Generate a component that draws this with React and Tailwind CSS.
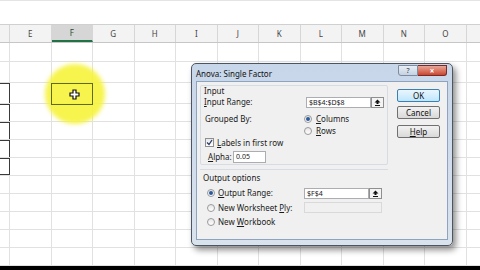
import React from "react";

const cols = ["E", "F", "G", "H", "I", "J", "K", "L", "M", "N", "O"];
const rowHeights = [19, 21, 21, 18, 18, 18, 18, 18, 18, 18, 18, 18];

function Radio({ checked }) {
  return (
    <span className="w-[8px] h-[8px] rounded-full border border-[#9a9a9a] bg-gradient-to-b from-[#e6e6e6] to-[#ffffff] flex items-center justify-center shrink-0">
      {checked && <span className="w-[4px] h-[4px] rounded-full bg-[#2c5a9e]" />}
    </span>
  );
}

function RefButton() {
  return (
    <span className="w-[13px] h-[11px] border border-[#8e8f8f] bg-[#f4f4f4] flex items-center justify-center shrink-0">
      <svg width="7" height="7" viewBox="0 0 7 7">
        <path d="M3.5 0.5 L6.5 3.5 L4.5 3.5 L4.5 5 L2.5 5 L2.5 3.5 L0.5 3.5 Z" fill="#111" />
        <rect x="1" y="6" width="5" height="1" fill="#111" />
      </svg>
    </span>
  );
}

function Btn({ children, focused }) {
  return (
    <div
      className={
        "w-[43px] h-[13px] rounded-[2px] flex items-center justify-center text-[#111] " +
        (focused
          ? "border border-[#3c7fb1] bg-gradient-to-b from-[#eaf6fd] to-[#bee6fd]"
          : "border border-[#707070] bg-gradient-to-b from-[#f2f2f2] to-[#d9d9d9]")
      }
    >
      {children}
    </div>
  );
}

export default function App() {
  return (
    <div
      className="relative w-[480px] h-[270px] overflow-hidden bg-white"
      style={{ fontFamily: '"Noto Sans", "DejaVu Sans", sans-serif' }}
    >
      {/* Top blank area */}
      <div className="h-[25px] border-t border-t-[#e4e4e4] border-b border-b-[#d0d0d0] bg-white" />

      {/* Column headers */}
      <div className="flex h-[18px] bg-[#f3f3f3] border-b border-[#c6c6c6]">
        <div className="w-[10px] border-r border-[#d6d6d6]" />
        {cols.map((c) => (
          <div
            key={c}
            className={
              "w-[41.5px] shrink-0 border-r border-[#d6d6d6] flex items-center justify-center text-[8px] " +
              (c === "F" ? "bg-[#d6d6d6] border-b-2 border-b-[#217346] text-[#1e4e2e]" : "text-[#444]")
            }
          >
            {c}
          </div>
        ))}
        <div className="flex-1" />
      </div>

      {/* Grid rows */}
      {rowHeights.map((h, r) => {
        const boxed = r >= 2 && r <= 6;
        return (
          <div key={r} className="flex border-b border-[#e1e1e1]" style={{ height: h }}>
            <div
              className={
                "w-[10px] shrink-0 " +
                (boxed
                  ? "border-r border-r-[#3a3a3a] border-t border-t-[#3a3a3a] " + (r === 6 ? "border-b border-b-[#3a3a3a]" : "")
                  : "border-r border-[#e1e1e1]")
              }
            />
            {cols.map((c) => (
              <div key={c} className="w-[41.5px] shrink-0 border-r border-[#e1e1e1]" />
            ))}
            <div className="flex-1" />
          </div>
        );
      })}
      <div className="absolute left-0 right-0 bottom-0 h-[4px] bg-black" />

      {/* Yellow cursor highlight */}
      <div className="absolute left-[45px] top-[64px] w-[60px] h-[60px] rounded-full bg-[#f6f33a] opacity-90 blur-[2px]" />
      <div className="absolute left-[51px] top-[83px] w-[42px] h-[22px] border border-[#5f6a1a]" />
      <svg className="absolute left-[69px] top-[89px]" width="11" height="11" viewBox="0 0 11 11">
        <path d="M4 1 H7 V4 H10 V7 H7 V10 H4 V7 H1 V4 H4 Z" fill="#fff" stroke="#111" strokeWidth="1.2" />
      </svg>

      {/* Dialog window */}
      <div className="absolute left-[191px] top-[63px] w-[262px] h-[183px] rounded-[5px] border border-[#4d5560] bg-gradient-to-b from-[#c7d6e9] to-[#d9e3ee] shadow-[3px_4px_6px_rgba(0,0,0,0.45)] flex flex-col">
        {/* Title bar */}
        <div className="h-[17px] flex items-start pl-[4px] pr-[5px]">
          <span className="text-[8px] text-[#111] mt-[4px]">Anova: Single Factor</span>
          <div className="ml-auto flex mt-[1px]">
            <div className="w-[20px] h-[11px] rounded-bl-[3px] border border-[#7d8b9c] bg-gradient-to-b from-[#e9eef5] to-[#c4d2e3] flex items-center justify-center text-[7px] leading-none text-[#333]">
              ?
            </div>
            <div className="w-[29px] h-[11px] rounded-br-[3px] border border-l-0 border-[#7a2a22] bg-gradient-to-b from-[#e8a597] to-[#c8442f] flex items-center justify-center text-[8px] font-bold leading-none text-white">
              ×
            </div>
          </div>
        </div>

        {/* Client area */}
        <div className="mx-[4px] mb-[5px] flex-1 border border-[#8ea3bd] bg-[#f0f0f0] flex text-[8px] text-[#1a1a1a] leading-none">
          {/* Left: group boxes */}
          <div className="w-[188px] ml-[3px] pt-[3px] flex flex-col">
            <div className="h-[80px] border border-[#d5dde3] rounded-[2px] flex flex-col px-[3px]">
              <div className="h-[10px] flex items-center">Input</div>
              <div className="h-[12px] flex items-center">
                <span className="w-[102px]">
                  <u>I</u>nput Range:
                </span>
                <span className="w-[65px] h-[11px] border border-[#abadb3] bg-white flex items-center px-[2px] text-[7px]">
                  $B$4:$D$8
                </span>
                <RefButton />
              </div>
              <div className="h-[15px] mt-[3px] flex items-center">
                <span className="w-[100px] pl-[1px]">Grouped By:</span>
                <Radio checked />
                <span className="ml-[4px]">
                  <u>C</u>olumns
                </span>
              </div>
              <div className="h-[10px] flex items-center">
                <span className="w-[100px]" />
                <Radio />
                <span className="ml-[4px]">
                  <u>R</u>ows
                </span>
              </div>
              <div className="h-[13px] flex items-center pl-[1px]">
                <span className="w-[9px] h-[9px] border border-[#8f8f8f] bg-gradient-to-b from-[#e8e8e8] to-white flex items-center justify-center">
                  <svg width="7" height="7" viewBox="0 0 7 7">
                    <path d="M1 3.5 L3 5.5 L6 1" fill="none" stroke="#2a3e6a" strokeWidth="1.3" />
                  </svg>
                </span>
                <span className="ml-[3px]">
                  <u>L</u>abels in first row
                </span>
              </div>
              <div className="h-[13px] mt-[1px] flex items-center pl-[4px]">
                <span className="w-[25px]">
                  <u>A</u>lpha:
                </span>
                <span className="w-[33px] h-[12px] border border-[#abadb3] bg-white flex items-center px-[2px] text-[7px]">
                  0.05
                </span>
              </div>
            </div>

            <div className="h-[62px] mt-[4px] border-t border-[#d5dde3] flex flex-col px-[3px] pt-[2px]">
              <div className="h-[12px] flex items-center">Output options</div>
              <div className="h-[14px] mt-[2px] flex items-center pl-[4px]">
                <Radio checked />
                <span className="ml-[3px] w-[86px]">
                  <u>O</u>utput Range:
                </span>
                <span className="w-[65px] h-[11px] border border-[#abadb3] bg-white flex items-center px-[2px] text-[7px]">
                  $F$4
                </span>
                <RefButton />
              </div>
              <div className="h-[15px] flex items-center pl-[4px]">
                <Radio />
                <span className="ml-[3px] w-[86px]">
                  New Worksheet <u>P</u>ly:
                </span>
                <span className="w-[78px] h-[11px] border border-[#d9d9d9] bg-[#f0f0f0]" />
              </div>
              <div className="h-[14px] flex items-center pl-[4px]">
                <Radio />
                <span className="ml-[3px]">
                  New <u>W</u>orkbook
                </span>
              </div>
            </div>
          </div>

          {/* Right: buttons */}
          <div className="ml-[9px] pt-[7px] flex flex-col gap-[4px]">
            <Btn focused>OK</Btn>
            <Btn>Cancel</Btn>
            <div className="mt-[2px]">
              <Btn>
                <u>H</u>elp
              </Btn>
            </div>
          </div>
        </div>
      </div>
    </div>
  );
}
